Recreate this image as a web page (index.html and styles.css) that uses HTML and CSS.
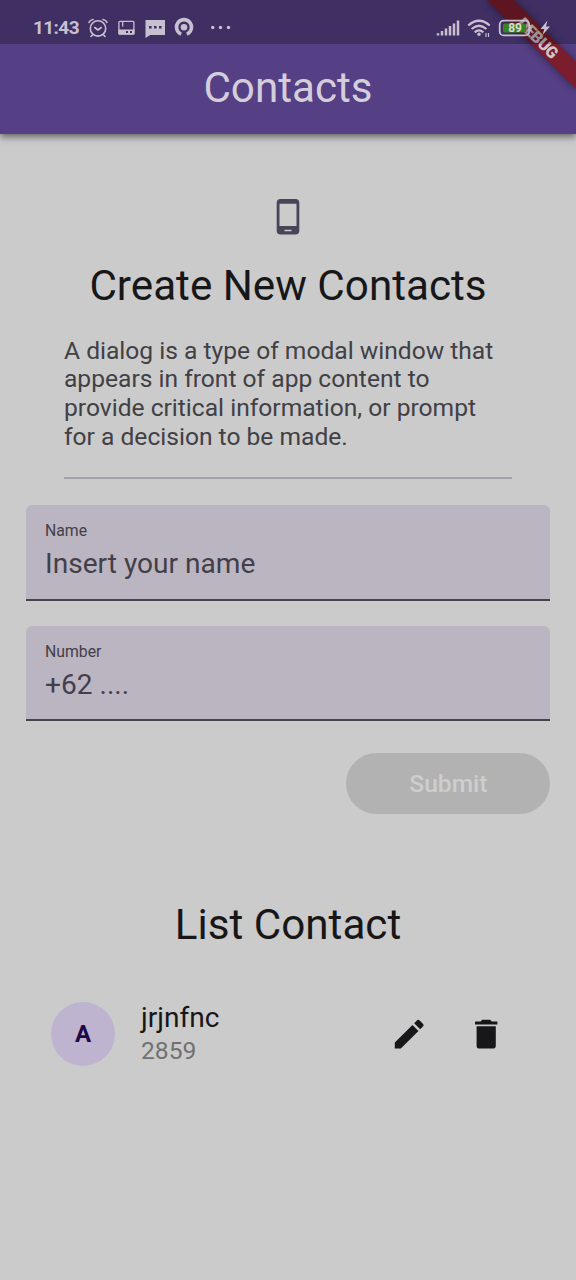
FILE: index.html
```html
<!DOCTYPE html>
<html lang="en">
<head>
<meta charset="utf-8">
<title>Contacts</title>
<link rel="stylesheet" href="styles.css">
</head>
<body>
<header class="app-bar"><h1 class="app-title">Contacts</h1></header>

<svg class="debug-banner" viewBox="0 0 100 100" aria-label="Debug">
  <defs><filter id="soft" x="-20%" y="-20%" width="140%" height="140%"><feGaussianBlur stdDeviation="3.5"/></filter></defs>
  <path d="M10 0H38L100 62V90Z" fill="#000" opacity=".4" filter="url(#soft)"/>
  <path d="M11 0H38L100 62V89Z" fill="#7b1d2d"/>
  <text class="debug-text" transform="translate(62 38) rotate(45)" text-anchor="middle" y="5.8" textLength="50">DEBUG</text>
</svg>

<div class="status-bar">
  <span class="clock">11:43</span>
  <svg class="status-icons" width="150" height="24" viewBox="86 16 150 24" fill="none" stroke="#c7c0d0">
    <g stroke-width="1.6" stroke-linecap="round" stroke-linejoin="round">
      <circle cx="98" cy="28.4" r="7.7"/>
      <path d="M94.800 27.500l3.200 2.500 3.200-2.500M89 22.300q1-2.200 4-2.800M107 22.300q-1-2.200-4-2.800M92.800 34.500l-1.800 2M103.200 34.500l1.800 2"/>
    </g>
    <rect x="118.9" y="21.4" width="15" height="12.6" rx="1" stroke-width="1.3"/>
    <path d="M118.500 29.500h16v5h-16zM122 22v4.500h1.300V22z" fill="#c7c0d0" stroke="none"/>
    <path d="M126 31h2v2h-2zM130 31h2v2h-2z" fill="#3f3164" stroke="none"/>
    <path d="M145.500 20h19.500v15h-14.800l-4.700 3z" fill="#c7c0d0" stroke="none"/>
    <path d="M149 26h2.600v2.600H149zM154 26h2.600v2.600H154zM159 26h2.600v2.600H159z" fill="#3f3164" stroke="none"/>
    <path d="M181.200 34.100A7.500 7.500 0 1 1 186.800 34.100" stroke-width="3.600"/>
    <circle cx="184" cy="27.300" r="3.300" fill="#c7c0d0" stroke="none"/>
    <g fill="#c7c0d0" stroke="none"><circle cx="212.700" cy="27.500" r="1.700"/><circle cx="220.500" cy="27.500" r="1.700"/><circle cx="228.500" cy="27.500" r="1.700"/></g>
  </svg>
  <svg class="system-icons" width="120" height="24" viewBox="434 16 120 24" fill="none" stroke="#c7c0d0">
    <path d="M438 35.500v-2.300M442 35.500v-4.500M446 35.500v-7M450 35.500v-9.500M454 35.500v-12M458 35.500v-15" stroke-width="2.500"/>
    <g stroke-width="2.300"><path d="M468.300 25.500q10.700-9.500 21.400 0"/><path d="M471.600 29q7.400-6.500 14.800 0"/><path d="M474.700 32.300q4.300-3.800 8.600 0"/></g>
    <circle cx="479" cy="34.200" r="1.700" fill="#c7c0d0" stroke="none"/>
    <path d="M486 33v4M488.500 33v4" stroke-width="1.200"/>
    <rect x="499.700" y="20.600" width="29.500" height="14.800" rx="4" stroke-width="1.800"/>
    <rect x="503" y="23.500" width="23" height="9" rx="1.500" fill="#36851f" stroke="none"/>
    <path d="M531 25v6" stroke-width="1.800" opacity=".6"/>
    <text class="battery-text" x="508.200" y="32.200" stroke="none">89</text>
    <path d="M547.500 20.500l-7 8.500h3.800l-1.800 6 7.500-8.500h-4z" fill="#c7c0d0" stroke="none"/>
  </svg>
</div>

<main class="page">
  <section class="intro">
    <svg class="phone-icon" viewBox="0 0 24 38"><path fill="#494458" fill-rule="evenodd" d="M4.500 1h15A3.800 3.800 0 0 1 23.300 4.800v28a3.800 3.800 0 0 1-3.800 3.800h-15A3.800 3.800 0 0 1 .7 32.800v-28A3.800 3.800 0 0 1 4.500 1zM3.500 5.800v22.200h17V5.800zM8.500 31.800v1.500h7v-1.500z"/></svg>
    <h2 class="headline">Create New Contacts</h2>
    <p class="description">A dialog is a type of modal window that<br>appears in front of app content to<br>provide critical information, or prompt<br>for a decision to be made.</p>
  </section>
  <form class="form">
    <label class="field"><span class="field-label">Name</span><span class="field-hint">Insert your name</span></label>
    <label class="field"><span class="field-label">Number</span><span class="field-hint">+62 ....</span></label>
    <button class="submit" type="button">Submit</button>
  </form>
  <h2 class="list-title">List Contact</h2>
  <article class="contact">
    <span class="avatar">A</span>
    <div class="contact-text"><span class="contact-name">jrjnfnc</span><span class="contact-number">2859</span></div>
    <svg class="action" viewBox="0 0 24 24"><path d="M3 17.250V21h3.750L17.810 9.940l-3.750-3.750L3 17.250zM20.710 7.040a1 1 0 0 0 0-1.410l-2.340-2.340a1 1 0 0 0-1.410 0l-1.830 1.830 3.750 3.750 1.830-1.830z"/></svg>
    <svg class="action" viewBox="0 0 24 24"><path d="M6 19a2 2 0 0 0 2 2h8a2 2 0 0 0 2-2V7H6v12zM19 4h-3.500l-1-1h-5l-1 1H5v2h14V4z"/></svg>
  </article>
</main>
</body>
</html>
```
FILE: styles.css
```css
* { box-sizing: border-box; }
body {
  margin: 0;
  min-height: 1280px;
  position: relative;
  overflow: hidden;
  background: #cbcbcb;
  font-family: Roboto, sans-serif;
  color: #171719;
}
h1, h2, p { margin: 0; font-weight: 400; }
.app-bar {
  height: 133.500px;
  padding: 44px 0 1px;
  background: #553f85;
  box-shadow: 0 3px 7px rgba(0, 0, 0, .5);
  display: flex;
  align-items: center;
  justify-content: center;
}
.app-title { color: #d4cddb; font-size: 42.200px; line-height: 50px; }
.debug-banner { position: absolute; top: 0; right: 0; width: 100px; height: 100px; }
.debug-text { font-size: 16.300px; font-weight: 900; fill: #d0c5cd; }
.status-bar {
  position: absolute;
  top: 0; left: 0; right: 0;
  height: 44px;
  padding: 12px 22px 0 33px;
  display: flex;
  background: rgba(0, 0, 0, .25);
}
.clock { width: 53px; margin-top: 4px; font-size: 19px; line-height: 24px; letter-spacing: -.6px; font-weight: 700; color: #c7c0d0; }
.status-icons, .system-icons { margin-top: 4px; }
.system-icons { margin-left: auto; }
.battery-text { font-size: 12px; font-weight: 700; fill: #d7dfd3; }
.page { padding: 64px 25.600px 0; }
.intro { margin: 0 38.400px; display: flex; flex-direction: column; border-bottom: 2px solid #a5a3ae; height: 281.500px; }
.phone-icon { width: 24px; height: 38px; align-self: center; }
.headline { margin: 24px -10px 0; text-align: center; font-size: 42.200px; line-height: 51px; white-space: nowrap; }
.description { margin-top: 26px; font-size: 24.600px; line-height: 28.800px; color: #414045; white-space: nowrap; }
.form { margin-top: 26px; display: flex; flex-direction: column; gap: 25px; }
.field {
  height: 95.500px;
  padding: 15px 19.400px;
  display: flex;
  flex-direction: column;
  background: #bbb5c1;
  border-bottom: 2px solid #47424d;
  border-radius: 6px 6px 0 0;
  color: #433f49;
}
.field-label { font-size: 15.800px; line-height: 22px; }
.field-hint { font-size: 28.100px; line-height: 43px; }
.submit {
  align-self: flex-end;
  width: 204px; height: 61px;
  margin-top: 7px;
  border: 0;
  border-radius: 31px;
  background: #b2b2b2;
  color: #cecece;
  font: 500 24.600px/30px Roboto, sans-serif;
}
.list-title { margin-top: 84.500px; text-align: center; font-size: 42.200px; line-height: 52px; }
.contact { margin-top: 50.500px; padding: 0 45px 0 25.400px; display: flex; align-items: center; }
.avatar {
  width: 64px; height: 64px;
  border-radius: 50%;
  background: #bfb4cf;
  color: #1d0848;
  font-size: 24px; font-weight: 700;
  display: flex; align-items: center; justify-content: center;
}
.contact-text { margin: 0 auto 0 26px; display: flex; flex-direction: column; }
.contact-name { font-size: 28.100px; line-height: 33px; }
.contact-number { font-size: 24.600px; line-height: 33px; color: #717171; }
.action { width: 38.400px; height: 38.400px; margin-left: 38.400px; fill: #171719; }
```
